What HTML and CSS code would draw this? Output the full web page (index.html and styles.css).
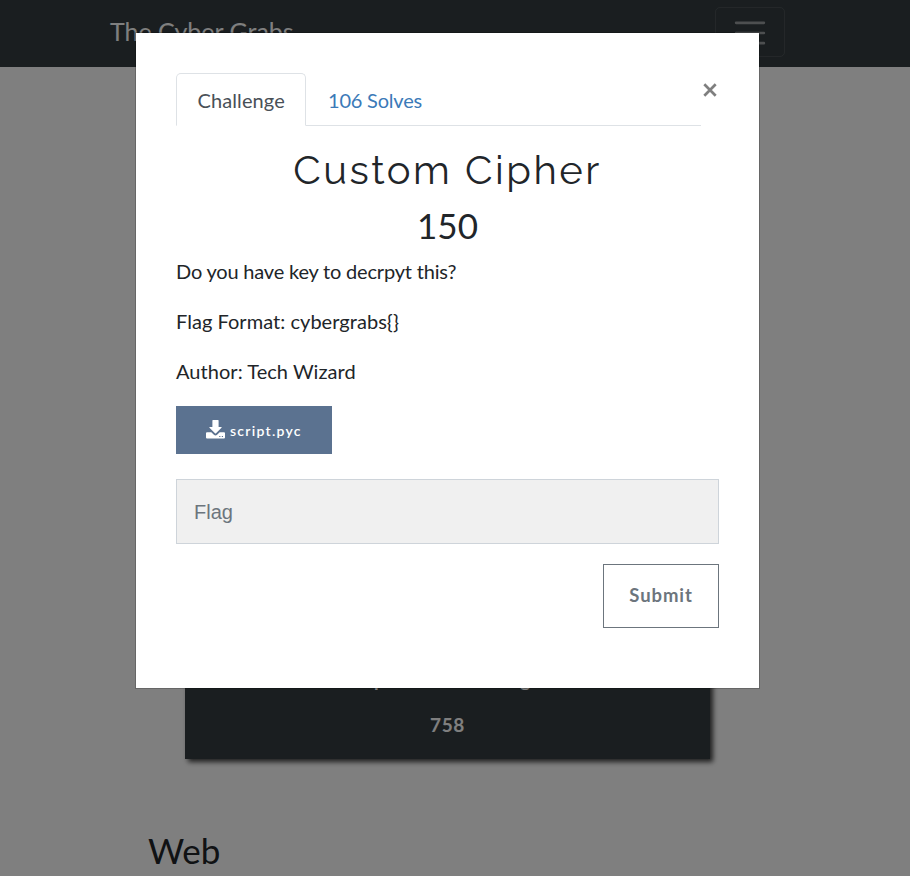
FILE: index.html
```html
<!DOCTYPE html>
<html lang="en">
<head>
<meta charset="utf-8">
<title>The Cyber Grabs</title>
<link rel="stylesheet" href="styles.css">
</head>
<body>
<nav class="navbar">
  <span class="brand">The Cyber Grabs</span>
  <span class="toggler"><svg viewBox="0 0 30 30" width="38" height="38"><path stroke="rgba(255,255,255,.5)" stroke-width="2" stroke-linecap="round" d="M4 7h22M4 15h22M4 23h22"/></svg></span>
</nav>
<main class="page">
  <div class="card">
    <div class="card-name"><span>p</span><span>g</span></div>
    <div class="card-value">758</div>
  </div>
  <h3 class="category">Web</h3>
</main>
<div class="backdrop">
  <section class="modal">
    <button class="close" aria-label="Close"><svg viewBox="0 0 14 14" width="14" height="14"><path d="M1.3 1.3 12.7 12.7M12.7 1.3 1.3 12.7" stroke="#7f7f7f" stroke-width="2.7"/></svg></button>
    <div class="tabs">
      <span class="tab active">Challenge</span>
      <span class="tab">106 Solves</span>
    </div>
    <h2 class="name">Custom Cipher</h2>
    <h3 class="value">150</h3>
    <div class="description">
      <p class="question">Do you have key to decrpyt this?</p>
      <p>Flag Format: cybergrabs{}</p>
      <p>Author: Tech Wizard</p>
    </div>
    <a class="file"><svg viewBox="0 0 19 19" width="19" height="19"><path fill="#fff" d="M7 0h5q.6 0 .6.6V7h2.700q.8 0 .2.700l-5.500 5.500q-.5.5-1 0L3.500 7.700Q2.900 7 3.700 7h2.700V.6Q6.400 0 7 0z"/><path fill="#fff" fill-rule="evenodd" d="M1 12.300h4.300l2.600 2.500q1.600 1.400 3.200 0l2.600-2.500H18q1 0 1 1v4.200q0 1-1 1H1q-1 0-1-1v-4.200q0-1 1-1zM13.200 16v1h1.200v-1zm2.600 0v1H17v-1z"/></svg><span>script.pyc</span></a>
    <input class="flag" placeholder="Flag" aria-label="Flag">
    <button class="submit">Submit</button>
  </section>
</div>
</body>
</html>
```
FILE: styles.css
```css
* { box-sizing: border-box; }
body {
  margin: 0;
  height: 876px;
  overflow: hidden;
  background: #fff;
  color: #212529;
  font: 20px/30px Lato, "Liberation Sans", sans-serif;
}
h2, h3, p { margin: 0; font-weight: 400; }
.navbar {
  display: flex;
  justify-content: space-between;
  align-items: center;
  height: 67px;
  padding: 0 125px 3px 110px;
  background: #343c40;
}
.brand { padding-bottom: 2px; color: #fff; font-size: 25px; line-height: 38px; }
.toggler {
  display: flex;
  align-items: center;
  justify-content: center;
  width: 70px;
  height: 50px;
  border: 1px solid rgba(255, 255, 255, .1);
  border-radius: 5px;
}
.toggler svg { fill: none; margin-top: 1px; }
.page { padding: 553px 148px 0; }
.card {
  width: 525px;
  height: 139px;
  margin-left: 37px;
  padding-top: 45px;
  background: #343c40;
  box-shadow: 3px 3px 5px rgba(0, 0, 0, .75);
  color: #fff;
  font-size: 19px;
  font-weight: 700;
  letter-spacing: .7px;
  text-align: center;
}
.card-name {
  display: flex;
  justify-content: space-between;
  width: 157px;
  margin: 0 auto;
  position: relative;
  left: 5px;
}
.card-value { margin-top: 15px; }
.category { margin-top: 70px; font-size: 35px; line-height: 42px; }
.backdrop {
  position: fixed;
  inset: 0;
  padding: 32px 0 0 135px;
  background: rgba(0, 0, 0, .5);
}
.modal {
  position: relative;
  display: flex;
  flex-direction: column;
  width: 625px;
  height: 657px;
  padding: 40px;
  border: 1px solid rgba(0, 0, 0, .2);
  background: #fff;
  background-clip: padding-box;
}
.close {
  position: absolute;
  top: 50px;
  right: 42px;
  display: flex;
  padding: 0;
  border: 0;
  background: none;
}
.tabs {
  display: flex;
  width: 525px;
  height: 53px;
  border-bottom: 1px solid #dee2e6;
}
.tab {
  height: 53px;
  padding: 11px 21px 0 22px;
  color: #3b7ab8;
  line-height: 32px;
  letter-spacing: -.2px;
}
.tab.active {
  width: 130px;
  padding: 10px 0 0 20.5px;
  border: 1px solid #dee2e6;
  border-bottom-color: #fff;
  border-radius: 5px 5px 0 0;
  color: #495057;
  letter-spacing: .1px;
}
.name {
  margin-top: 20px;
  font-family: Raleway, Lato, sans-serif;
  font-size: 40px;
  font-weight: 400;
  line-height: 48px;
  letter-spacing: 2.5px;
  text-align: center;
}
.value { margin-top: 10px; font-size: 35px; line-height: 42px; text-align: center; }
.description { display: grid; gap: 20px; margin-top: 10px; letter-spacing: .04px; }
.question { letter-spacing: -.19px; }
.file {
  display: flex;
  align-items: center;
  gap: 5px;
  width: 156px;
  height: 48px;
  margin-top: 20px;
  padding-left: 30px;
  background: #5b7290;
  color: #fff;
  font-size: 14px;
  font-weight: 600;
  letter-spacing: 1.25px;
}
.file svg { margin-top: -1px; }
.file span { padding-top: 2px; }
.flag {
  width: 543px;
  height: 65px;
  margin-top: 25px;
  padding: 2px 17px 0;
  border: 1px solid #ced4da;
  border-radius: 0;
  background: #f0f0f0;
  font: 20px "Liberation Sans", sans-serif;
}
.flag::placeholder { color: #6c757d; opacity: 1; }
.submit {
  align-self: flex-end;
  width: 116px;
  height: 64px;
  margin-top: 20px;
  padding: 0 0 3px;
  border: 1px solid #6c757d;
  background: #fff;
  color: #6c757d;
  font: 700 18.5px Lato, sans-serif;
  letter-spacing: .9px;
}
```
